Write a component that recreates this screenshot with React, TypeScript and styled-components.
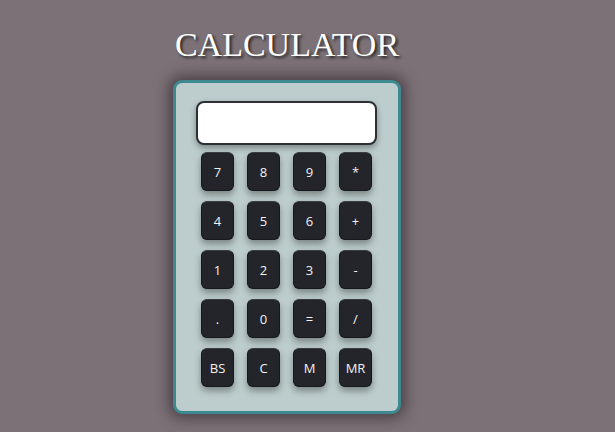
import React, { useState } from "react";
import styled, { createGlobalStyle } from "styled-components";

const GlobalStyle = createGlobalStyle`
  html, body {
    margin: 0;
    padding: 0;
    background: #7b7176;
  }
`;

const keys = [
  "7", "8", "9", "*",
  "4", "5", "6", "+",
  "1", "2", "3", "-",
  ".", "0", "=", "/",
  "BS", "C", "M", "MR",
];

const App = () => {
  const [value, setValue] = useState("");

  const press = (k: string) => {
    if (k === "C") setValue("");
    else if (k === "BS") setValue((v) => v.slice(0, -1));
    else if (k === "M" || k === "MR") return;
    else if (k === "=") {
      try {
        // eslint-disable-next-line no-new-func
        setValue(String(Function(`return (${value})`)()));
      } catch {
        setValue("Error");
      }
    } else setValue((v) => v + k);
  };

  return (
    <Page>
      <GlobalStyle />
      <Wrapper>
        <Title>CALCULATOR</Title>
        <Body>
          <Display value={value} readOnly />
          <Keys>
            {keys.map((k) => (
              <Key key={k} onClick={() => press(k)}>
                {k}
              </Key>
            ))}
          </Keys>
        </Body>
      </Wrapper>
    </Page>
  );
};

const Page = styled.div`
  width: 615px;
  height: 432px;
  overflow: hidden;
`;

const Wrapper = styled.div`
  width: 228px;
  margin-left: 173px;
  padding-top: 24px;
`;

const Title = styled.h1`
  margin: 0 0 15px;
  text-align: center;
  font-family: "Liberation Serif", "Times New Roman", serif;
  font-weight: normal;
  font-size: 34px;
  line-height: 41px;
  color: #ffffff;
  text-shadow: 2px 2px 3px rgba(0, 0, 0, 0.7);
`;

const Body = styled.div`
  box-sizing: border-box;
  width: 228px;
  padding: 18px 23px 24px 20px;
  background: #bdcdcd;
  border: 3px solid #3c8a90;
  border-radius: 9px;
  box-shadow: 0 0 14px 4px rgba(40, 30, 35, 0.6);
`;

const Display = styled.input`
  display: block;
  box-sizing: border-box;
  width: 181px;
  height: 44px;
  margin: 0 0 7px;
  padding: 0 10px;
  background: #ffffff;
  border: 2px solid #2c2f33;
  border-radius: 8px;
  box-shadow: 0 3px 6px rgba(0, 0, 0, 0.35);
  font-family: "Open Sans", sans-serif;
  font-size: 18px;
  text-align: right;
  outline: none;
`;

const Keys = styled.div`
  display: grid;
  grid-template-columns: repeat(4, 33px);
  grid-auto-rows: 39px;
  column-gap: 13px;
  row-gap: 10px;
  padding-left: 5px;
`;

const Key = styled.button`
  padding: 0;
  background: #23252a;
  border: 1px solid #16181b;
  border-top-color: #3a3d42;
  border-radius: 6px;
  box-shadow: 0 4px 7px rgba(0, 0, 0, 0.35);
  color: #f2f2f2;
  font-family: "Open Sans", sans-serif;
  font-size: 13px;
  cursor: pointer;
`;

export default App;
